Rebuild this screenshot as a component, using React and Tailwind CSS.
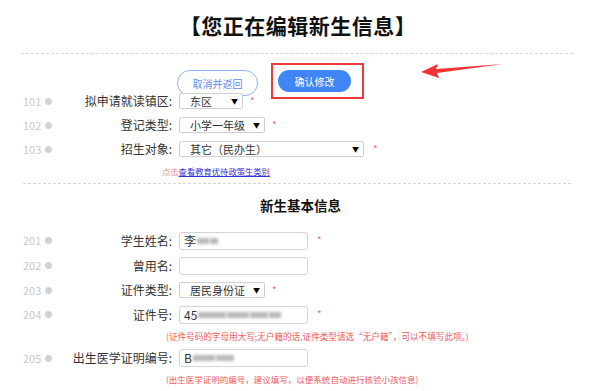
import React from "react";

const font = { fontFamily: '"Noto Sans CJK SC", "Noto Sans", sans-serif' };

function Star({ className = "" }) {
  return <span className={`text-[10px] leading-none text-[#f36a6a] self-start mt-[3px] ${className}`}>*</span>;
}

function Select({ value, width }) {
  return (
    <div className={`h-[16px] ${width} border border-[#cfcfcf] rounded-[2px] bg-white flex items-center justify-between pl-[10px] pr-[4px] text-[11px] text-[#333]`}>
      <span className="leading-none">{value}</span>
      <span className="text-[7px] leading-none text-black">▼</span>
    </div>
  );
}

function Input({ children }) {
  return (
    <div className="h-[18px] w-[129px] border border-[#d4d4d4] rounded-[3px] bg-white flex items-center px-[4px] text-[12px] text-[#333] overflow-hidden">
      {children}
    </div>
  );
}

function Blur({ w }) {
  return <span className={`inline-block h-[6px] ${w} bg-[#9a9a9a] blur-[1.5px] opacity-70 ml-[1px]`} />;
}

function Row({ no, label, children, h = "h-[24px]" }) {
  return (
    <div className={`flex items-center ${h}`}>
      <div className="w-[172px] flex items-center shrink-0">
        <span className="pl-[23px] text-[11px] text-[#c8c8c8] leading-none">{no}</span>
        <span className="ml-[4px] w-[7px] h-[7px] rounded-full bg-[#d2d2d2]" />
        <span className="flex-1 text-right text-[12px] text-[#333] leading-none">{label}</span>
      </div>
      <div className="ml-[7px] flex items-center gap-[7px]">{children}</div>
    </div>
  );
}

export default function App() {
  return (
    <div className="relative w-[594px] h-[391px] bg-white overflow-hidden" style={font}>
      <div className="mx-[21px] h-[54px] flex items-center justify-center border-b border-dashed border-[#d6d6d6]">
        <h1 className="text-[21px] font-bold text-[#111] tracking-[0.5px] pl-[2px] pb-[1px]">【您正在编辑新生信息】</h1>
      </div>

      <div className="h-[35px] pt-[16px] flex items-start">
        <div className="ml-[177px] w-[81px] h-[26px] rounded-full border border-[#8fb2f5] bg-white flex items-center justify-center text-[10px] text-[#5b8def]">
          取消并返回
        </div>
        <div className="ml-[20px] w-[73px] h-[22px] rounded-full bg-[#3f85f5] flex items-center justify-center text-[10px] text-white">
          确认修改
        </div>
      </div>

      <Row no="101" label="拟申请就读镇区:">
        <Select value="东区" width="w-[64px]" />
        <Star />
      </Row>
      <Row no="102" label="登记类型:">
        <Select value="小学一年级" width="w-[86px]" />
        <Star />
      </Row>
      <Row no="103" label="招生对象:">
        <Select value="其它（民办生）" width="w-[185px]" />
        <Star className="ml-[2px]" />
      </Row>
      <div className="h-[20px] flex items-center pl-[162px] text-[8.3px] leading-none">
        <span className="text-[#f08a8a]">点击</span>
        <span className="text-[#3434d0] underline">查看教育优待政策生类别</span>
      </div>
      <div className="mx-[23px] border-b border-dashed border-[#d6d6d6] mt-[2px]" />

      <div className="h-[44px] flex items-center justify-center pl-[7px]">
        <h2 className="text-[13.5px] font-bold text-[#111] leading-none">新生基本信息</h2>
      </div>

      <Row no="201" label="学生姓名:" h="h-[25px]">
        <Input>
          <span>李</span>
          <Blur w="w-[12px]" />
          <Blur w="w-[8px]" />
        </Input>
        <Star className="ml-[2px]" />
      </Row>
      <Row no="202" label="曾用名:" h="h-[25px]">
        <Input />
      </Row>
      <Row no="203" label="证件类型:" h="h-[24px]">
        <Select value="居民身份证" width="w-[86px]" />
        <Star />
      </Row>
      <Row no="204" label="证件号:" h="h-[25px]">
        <Input>
          <span>45</span>
          <Blur w="w-[28px]" />
          <Blur w="w-[22px]" />
          <Blur w="w-[18px]" />
          <Blur w="w-[12px]" />
        </Input>
        <Star className="ml-[2px]" />
      </Row>
      <div className="h-[18px] flex items-center pl-[166px] text-[8.6px] text-[#f05a5a] leading-none">
        (证件号码的字母用大写;无户籍的话,证件类型请选“无户籍”，可以不填写此项。)
      </div>
      <Row no="205" label="出生医学证明编号:" h="h-[26px]">
        <Input>
          <span>B</span>
          <Blur w="w-[22px]" />
          <Blur w="w-[18px]" />
        </Input>
      </Row>
      <div className="h-[17px] flex items-center pl-[166px] text-[8.5px] text-[#f05a5a] leading-none">
        (出生医学证明的编号，建议填写，以便系统自动进行核验小孩信息)
      </div>
      <div className="pl-[179px] pt-[6px]">
        <div className="h-[16px] w-[86px] border border-[#cfcfcf] rounded-[2px]" />
      </div>

      <div className="absolute left-[271px] top-[63px] w-[93px] h-[36px] border-2 border-[#f03a3a]" />
      <svg className="absolute left-[415px] top-[60px]" width="95" height="22" viewBox="0 0 95 22">
        <path d="M6 12 L23 4 L21 9 L88 4 L22 13 L24 18 Z" fill="#f03434" />
      </svg>
    </div>
  );
}
